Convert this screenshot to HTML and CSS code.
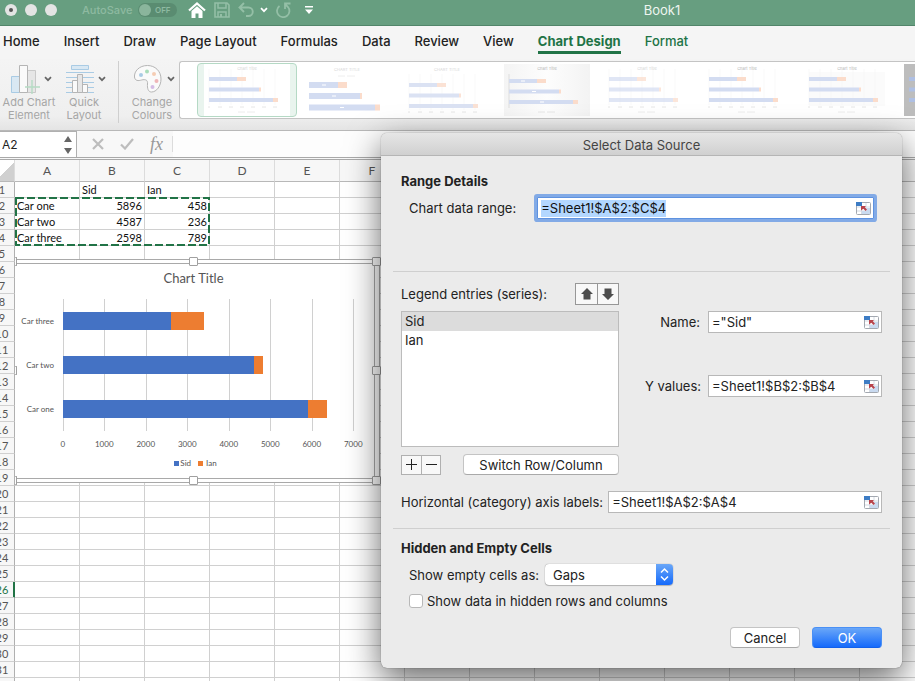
FILE: index.html
```
<!DOCTYPE html>
<html lang="en">
<head>
  <meta charset="UTF-8">
  <title>Book1</title>
  <link rel="stylesheet" href="styles.css">
</head>
<body>
  <svg class="defs" aria-hidden="true">
    <symbol id="picker" viewBox="0 0 15 13">
      <rect x=".5" y=".5" width="14" height="12" rx="1" fill="#fff" stroke="#a3a8b0"/>
      <path d="M1 5h13M1 9h13M5.500 1v11M10 1v11" stroke="#d5dbe4" fill="none"/>
      <path d="M6 9h8v3H6zM10.500 6H14v3h-3.500z" fill="#c9daf0"/>
      <path d="M0 0h6v4H0z" fill="#3d7cc4"/>
      <path d="M5 4h5L8.800 5.300 11 7.600 9.600 9 7.300 6.700 5 8.500z" fill="#b8434b"/>
    </symbol>
    <symbol id="chevron" viewBox="0 0 8 6">
      <path d="M1 1.200l3 3 3-3" fill="none" stroke="currentColor" stroke-width="1.700"/>
    </symbol>
    <symbol id="ticks" viewBox="0 0 80 46">
      <path d="M5 0v36M16 0v36M27 0v36M38 0v36M49 0v36M60 0v36M71 0v36M82 0v36" stroke="#f5f5f5" stroke-width=".6"/>
      <path d="M4 38h2M14 38h4M25 38h4M36 38h4M47 38h4M58 38h4M69 38h4" stroke="#e6e6e6"/>
      <path d="M34 43h7M43 43h8" stroke="#ececec"/>
    </symbol>
    <symbol id="bars" viewBox="0 0 86 52">
      <path d="M5 13h28v4H5zM5 23.500h50v4H5zM5 34h64v4H5z" fill="#d3dcf1"/>
      <path d="M33 13h9v4h-9zM55 23.500h2v4h-2zM69 34h5v4h-5z" fill="#fbdccb"/>
    </symbol>
    <symbol id="bars-thick" viewBox="0 0 86 52">
      <path d="M5 18h29v6H5zM5 29h51v6H5zM5 40.500h66v6H5z" fill="#d3dcf1"/>
      <path d="M34 18h9v6h-9zM56 29h2v6h-2zM71 40.500h5v6h-5z" fill="#fbdccb"/>
      <path d="M18 21h4M28 32h4M36 43.500h4" stroke="#fff"/>
    </symbol>
  </svg>

  <header class="titlebar">
    <span class="light light-dot"></span>
    <span class="light"></span>
    <span class="light"></span>
    <span class="autosave">AutoSave</span>
    <button class="toggle" aria-label="AutoSave off"><span class="knob"></span>OFF</button>
    <div class="quick">
      <button aria-label="Home"><svg width="18" height="16" viewBox="0 0 18 16"><path d="M1 8.500L9 1.500l8 7" fill="none" stroke="#fff" stroke-width="2.200"/><path d="M3.500 9L9 4.300 14.500 9v7h-4v-4.500h-3V16h-4z" fill="#fff"/></svg></button>
      <button class="faded" aria-label="Save"><svg width="16" height="16" viewBox="0 0 16 16"><path d="M1 1h12l2 2v12H1z" fill="none" stroke="currentColor" stroke-width="1.600"/><path d="M4 1v5h8V1M4 15v-5h8v5" fill="none" stroke="currentColor" stroke-width="1.500"/><path d="M6 12h2v3H6z" fill="currentColor"/></svg></button>
      <button class="faded" aria-label="Undo"><svg width="17" height="16" viewBox="0 0 17 16"><path d="M6 1L1.500 5.500 6 10M2 5.500h8.500a4 4 0 0 1 0 8.500H8" fill="none" stroke="currentColor" stroke-width="1.900"/></svg></button>
      <button class="more" aria-label="Undo list"><svg width="8" height="6"><use href="#chevron"/></svg></button>
      <button class="faded" aria-label="Redo"><svg width="16" height="16" viewBox="0 0 16 16"><path d="M3.500 4A6.200 6.200 0 1 0 12 5L9.500 2.500M9 7V1.500h5.500" fill="none" stroke="currentColor" stroke-width="1.800"/></svg></button>
      <button class="customise" aria-label="Customise toolbar"><svg width="8" height="8" viewBox="0 0 8 8"><path d="M0 0h8v1.500H0zM0 3.500h8L4 8z" fill="#fff"/></svg></button>
    </div>
    <span class="doc-name">Book1</span>
  </header>

  <nav class="tabs">
    <a href="#">Home</a>
    <a href="#">Insert</a>
    <a href="#">Draw</a>
    <a href="#">Page Layout</a>
    <a href="#">Formulas</a>
    <a href="#">Data</a>
    <a href="#">Review</a>
    <a href="#">View</a>
    <a href="#" class="active">Chart Design</a>
    <a href="#" class="context">Format</a>
  </nav>

  <section class="ribbon">
    <button class="tool">
      <span class="tool-icon">
        <svg width="30" height="30" viewBox="0 0 30 30"><path d="M1.500 12.500h8v16h-8z" fill="#d9e8f3" stroke="#a9cbe4"/><path d="M17.500 6.500h8v22h-8z" fill="#e6e6e6" stroke="#c9c9c9"/><path d="M9.500 1.500h8v27h-8z" fill="#fafafa" stroke="#b5b5b5"/><path d="M22 16v14M15 23h15" stroke="#b5dcc4" stroke-width="1.400"/></svg>
        <svg class="drop" width="8" height="6"><use href="#chevron"/></svg>
      </span>
      Add Chart<br>Element
    </button>
    <button class="tool">
      <span class="tool-icon">
        <svg width="28" height="30" viewBox="0 0 28 30"><path d="M0 8.500h28M0 13.500h28M0 18.500h28M0 23.500h28M0 28.500h28" stroke="#a9cbe4"/><path d="M5.500 1.500h17v4h-17z" fill="#d9e8f3" stroke="#a9cbe4"/><path d="M6.500 16.500h5v12h-5zM16.500 20.500h5v8h-5z" fill="#fafafa" stroke="#b5b5b5"/><path d="M11.500 10.500h5v18h-5z" fill="#e6e6e6" stroke="#b5b5b5"/></svg>
        <svg class="drop" width="8" height="6"><use href="#chevron"/></svg>
      </span>
      Quick<br>Layout
    </button>
    <button class="tool tool-colours">
      <span class="tool-icon">
        <svg width="30" height="30" viewBox="0 0 30 30"><path d="M14.500 1.500C6 1.500 1 7.500 1.500 13c.4 4 4 4 7 3 4-1 6.500 0 6 4-.3 4 .5 8 4 8 5 0 9.500-6 9.500-13 0-8-6-13.500-13.500-13.500z" fill="#fafafa" stroke="#b5b5b5"/><circle cx="8" cy="11" r="2" fill="#a9cbe4"/><circle cx="14" cy="7.500" r="2" fill="#a9dcb9"/><circle cx="21" cy="10" r="2" fill="#f5cdb4"/><circle cx="23.500" cy="17" r="2" fill="#efb5b8"/><circle cx="19.500" cy="23" r="2" fill="#d5bce6"/></svg>
        <svg class="drop" width="8" height="6"><use href="#chevron"/></svg>
      </span>
      Change<br>Colours
    </button>
    <div class="gallery">
      <button class="thumb selected" aria-label="Style 1"><svg viewBox="0 0 86 52"><rect width="86" height="52" fill="#fff"/><use href="#ticks" y="5" width="80" height="46"/><use href="#bars"/><text x="43" y="6" class="tiny">Chart Title</text></svg></button>
      <button class="thumb" aria-label="Style 2"><svg viewBox="0 0 86 52"><use href="#bars-thick"/><text x="43" y="7" class="tiny">CHART TITLE</text><path d="M34 12h7M43 12h8" stroke="#eee"/></svg></button>
      <button class="thumb" aria-label="Style 3"><svg viewBox="0 0 86 52"><use href="#ticks" y="10" width="80" height="46"/><g opacity=".8"><use href="#bars" y="6"/></g><text x="43" y="7" class="tiny">CHART TITLE</text></svg></button>
      <button class="thumb" aria-label="Style 4"><svg viewBox="0 0 86 52"><defs><linearGradient id="grey"><stop stop-color="#f4f4f4"/><stop offset=".5" stop-color="#fdfdfd"/><stop offset="1" stop-color="#f3f3f3"/></linearGradient></defs><rect width="86" height="52" fill="url(#grey)"/><path d="M5 10v34" stroke="#ddd"/><use href="#bars" y="2"/><path d="M17 17h4M28 27.500h4M36 38h4" stroke="#fff"/><text x="43" y="6" class="tiny dark">Chart Title</text><path d="M34 48h7M43 48h8" stroke="#e6e6e6"/></svg></button>
      <button class="thumb" aria-label="Style 5"><svg viewBox="0 0 86 52"><use href="#ticks" y="5" width="80" height="46"/><g opacity=".7"><use href="#bars"/></g><text x="43" y="6" class="tiny">Chart Title</text></svg></button>
      <button class="thumb" aria-label="Style 6"><svg viewBox="0 0 86 52"><use href="#ticks" y="5" width="80" height="46"/><use href="#bars"/><text x="43" y="6" class="tiny dark">Chart Title</text></svg></button>
      <button class="thumb" aria-label="Style 7"><svg viewBox="0 0 86 52"><rect x="5" y="8" width="76" height="34" fill="#fbfbfb"/><use href="#ticks" y="5" width="80" height="46"/><use href="#bars"/><text x="43" y="6" class="tiny dark">Chart Title</text></svg></button>
      <button class="thumb" aria-label="Style 8"><svg viewBox="0 0 86 52"><rect width="86" height="52" fill="#bdbdbd"/><path d="M5 13h28v4H5zM5 23.500h50v4H5zM5 34h64v4H5z" fill="#aebfe3"/></svg></button>
    </div>
  </section>

  <section class="formula-bar">
    <div class="name-box">
      <input type="text" value="A2" aria-label="Name box">
      <svg width="8" height="18" viewBox="0 0 8 18"><path d="M4 0l4 6H0zM4 18l4-6H0z" fill="#666"/></svg>
    </div>
    <div class="formula-tools">
      <button aria-label="Cancel entry"><svg width="12" height="12" viewBox="0 0 12 12"><path d="M1 1l10 10M11 1L1 11" stroke="#bdbdbd" stroke-width="2.200"/></svg></button>
      <button aria-label="Confirm entry"><svg width="14" height="12" viewBox="0 0 14 12"><path d="M1 6.500l4 4L13 1" fill="none" stroke="#bdbdbd" stroke-width="2.200"/></svg></button>
      <button class="fx" aria-label="Insert function">fx</button>
    </div>
    <input type="text" class="formula-input" aria-label="Formula">
  </section>

  <main class="sheet">
    <table class="grid">
      <colgroup id="cols"><col class="col-num"></colgroup>
      <thead><tr id="letters"><th class="corner"></th></tr></thead>
      <tbody id="rows"></tbody>
    </table>

    <svg class="ants" aria-hidden="true"><rect x="1" y="1" width="193" height="47" fill="none" stroke="#217346" stroke-width="2" stroke-dasharray="8 3"/></svg>

    <div class="chart-frame">
      <div class="chart">
        <h2>Chart Title</h2>
        <div class="plot">
          <div class="cats"><span>Car three</span><span>Car two</span><span>Car one</span></div>
          <div class="bars">
            <div class="lines"><i></i><i></i><i></i><i></i><i></i><i></i><i></i></div>
            <div class="bar"><span class="sid" style="width:37.110%"></span><span class="ian" style="width:11.270%"></span></div>
            <div class="bar"><span class="sid" style="width:65.530%"></span><span class="ian" style="width:3.370%"></span></div>
            <div class="bar"><span class="sid" style="width:84.230%"></span><span class="ian" style="width:6.540%"></span></div>
          </div>
        </div>
        <div class="axis"><span>0</span><span>1000</span><span>2000</span><span>3000</span><span>4000</span><span>5000</span><span>6000</span><span>7000</span></div>
        <div class="legend"><span class="key sid"></span>Sid<span class="key ian"></span>Ian</div>
      </div>
      <span class="handle n"></span><span class="handle ne"></span><span class="handle e"></span>
      <span class="handle se"></span><span class="handle s"></span>
      <span class="handle half nw"></span><span class="handle half w"></span><span class="handle half sw"></span>
    </div>
  </main>

  <form class="dialog" role="dialog" aria-labelledby="dialogTitle">
    <div class="dialog-title" id="dialogTitle">Select Data Source</div>
    <div class="dialog-body">
      <h3>Range Details</h3>
      <div class="row range-row">
        <label for="range">Chart data range:</label>
        <div class="field focused">
          <input type="text" id="range" value="=Sheet1!$A$2:$C$4">
          <button type="button" aria-label="Pick range"><svg width="15" height="13"><use href="#picker"/></svg></button>
        </div>
      </div>
      <hr>
      <div class="series">
        <div class="series-list">
          <div class="row series-head">
            <label for="series">Legend entries (series):</label>
            <div class="pair">
              <button type="button" aria-label="Move up"><svg width="12" height="12" viewBox="0 0 12 12"><path d="M6 0l6 6H9.500v5.500h-7V6H0z" fill="#4d4d4d"/></svg></button>
              <button type="button" aria-label="Move down"><svg width="12" height="12" viewBox="0 0 12 12"><path d="M6 12L0 6h2.500V.5h7V6H12z" fill="#4d4d4d"/></svg></button>
            </div>
          </div>
          <select id="series" class="listbox" size="6">
            <option selected>Sid</option>
            <option>Ian</option>
          </select>
          <div class="row series-foot">
            <div class="pair small">
              <button type="button" aria-label="Add series"><svg width="11" height="11" viewBox="0 0 11 11"><path d="M5.500 0v11M0 5.500h11" stroke="#222"/></svg></button>
              <button type="button" aria-label="Remove series"><svg width="11" height="11" viewBox="0 0 11 11"><path d="M0 5.500h11" stroke="#222"/></svg></button>
            </div>
            <button type="button" class="btn switch">Switch Row/Column</button>
          </div>
        </div>
        <div class="series-values">
          <label for="name">Name:</label>
          <div class="field">
            <input type="text" id="name" value='="Sid"'>
            <button type="button" aria-label="Pick name"><svg width="15" height="13"><use href="#picker"/></svg></button>
          </div>
          <label for="yvalues">Y values:</label>
          <div class="field">
            <input type="text" id="yvalues" value="=Sheet1!$B$2:$B$4">
            <button type="button" aria-label="Pick values"><svg width="15" height="13"><use href="#picker"/></svg></button>
          </div>
        </div>
      </div>
      <div class="row axis-row">
        <label for="axis">Horizontal (category) axis labels:</label>
        <div class="field">
          <input type="text" id="axis" value="=Sheet1!$A$2:$A$4">
          <button type="button" aria-label="Pick labels"><svg width="15" height="13"><use href="#picker"/></svg></button>
        </div>
      </div>
      <hr>
      <h3>Hidden and Empty Cells</h3>
      <div class="row empty-row">
        <label for="empty">Show empty cells as:</label>
        <div class="popup">
          <select id="empty"><option>Gaps</option><option>Zero</option></select>
          <svg width="17" height="21" viewBox="0 0 17 21"><path d="M5 8.500l3.500-3.500L12 8.500M5 12.500l3.500 3.500 3.500-3.500" fill="none" stroke="#fff" stroke-width="1.500"/></svg>
        </div>
      </div>
      <div class="row check-row">
        <input type="checkbox" id="hidden">
        <label for="hidden">Show data in hidden rows and columns</label>
      </div>
      <div class="actions">
        <button type="button" class="btn">Cancel</button>
        <button type="button" class="btn primary">OK</button>
      </div>
    </div>
  </form>

  <script src="script.js"></script>
</body>
</html>
```
FILE: styles.css
```
* {
  box-sizing: border-box;
}
body {
  margin: 0;
  height: 100vh;
  overflow: hidden;
  position: relative;
  display: flex;
  flex-direction: column;
  background: #fff;
  color: #222;
  font-family: Inter, "Liberation Sans", sans-serif;
  font-size: 13px;
}
button, input, select {
  font: inherit;
  color: inherit;
  margin: 0;
}
button {
  padding: 0;
  border: 0;
  background: none;
}
svg {
  display: block;
  flex: none;
}
.defs {
  position: absolute;
  width: 0;
  height: 0;
}

/* title bar */
.titlebar {
  flex: none;
  display: flex;
  align-items: center;
  height: 26px;
  padding: 0 0 5px 5px;
  background: #679e80;
  border-bottom: 1px solid #52856a;
}
.light {
  display: flex;
  width: 12px;
  height: 12px;
  margin-right: 8px;
  border-radius: 50%;
  background: #e4e4e4;
}
.light-dot::after {
  content: "";
  width: 4px;
  height: 4px;
  margin: auto;
  border-radius: 50%;
  background: #555;
}
.autosave {
  width: 56px;
  margin-left: 17px;
  color: #8ebaa1;
  font-size: 11px;
  font-weight: 500;
}
.toggle {
  display: flex;
  align-items: center;
  gap: 4px;
  width: 39px;
  height: 14px;
  border-radius: 7px;
  background: #5a8c71;
  color: #8ebaa1;
  font-size: 8px;
  font-weight: 600;
}
.knob {
  width: 12px;
  height: 12px;
  margin-left: 1px;
  border-radius: 50%;
  background: #8ab59c;
}
.quick {
  display: flex;
  align-items: center;
  margin-left: 11px;
  gap: 8px;
  color: #fff;
}
.quick .faded {
  color: #94bfa6;
}
.quick .more {
  margin-left: -3px;
}
.customise {
  margin-left: 5px;
}
.doc-name {
  flex: 1;
  padding: 0 50px 0 146px;
  text-align: center;
  color: #eef5f0;
}

/* ribbon */
.tabs {
  flex: none;
  display: flex;
  gap: 24px;
  height: 33px;
  padding: 7px 3px 0;
  background: #f5f5f5;
  font-weight: 500;
}
.tabs a {
  height: 21px;
  line-height: 17px;
  color: #222;
  text-decoration: none;
  white-space: nowrap;
}
.tabs .active, .tabs .context {
  color: #217346;
}
.tabs .active {
  border-bottom: 3px solid #217346;
  font-weight: 700;
}
.ribbon {
  flex: none;
  display: flex;
  height: 72px;
  padding: 2px 0 12px;
  background: linear-gradient(#f4f4f4, #efefef 80%, #e4e4e4);
  border-bottom: 1px solid #b8b8b8;
}
.tool {
  flex: none;
  display: flex;
  flex-direction: column;
  align-items: center;
  width: 58px;
  height: 62px;
  color: #a6a6a6;
  font-size: 11px;
  line-height: 13px;
}
.tool + .tool {
  width: 52px;
}
.tool-icon {
  display: flex;
  align-items: center;
  gap: 4px;
  padding-left: 4px;
  margin: 3px 0 2px;
}
.tool .drop {
  color: #666;
}
.ribbon .tool-colours {
  width: 60px;
  margin-left: 8px;
  border-left: 1px solid #cfcfcf;
  padding-left: 7px;
}
.gallery {
  flex: 1;
  display: flex;
  overflow: hidden;
  height: 58px;
  margin-left: 1px;
  padding: 1px 0 0 17px;
  background: #fff;
  border: 1px solid #c4c4c4;
  border-right: 0;
  border-radius: 3px 0 0 3px;
}
.thumb {
  flex: none;
  width: 100px;
  height: 54px;
  padding: 0 7px;
  border: 1px solid transparent;
  border-radius: 4px;
}
.thumb svg {
  width: 86px;
  height: 52px;
  margin-left: -1px;
}
.thumb.selected {
  background: #e9f4ee;
  border-color: #b5d9c5;
}
.tiny {
  font-size: 4px;
  text-anchor: middle;
  fill: #d6d6d6;
}
.tiny.dark {
  fill: #b5b5b5;
}

/* formula bar */
.formula-bar {
  flex: none;
  display: flex;
  height: 29px;
  background: #f8f8f8;
  border-bottom: 3px double #a9a9a9;
}
.name-box {
  display: flex;
  align-items: center;
  width: 77px;
  padding: 0 4px 0 2px;
  background: #fff;
  border: 1px solid #b0b0b0;
  border-left: 0;
  border-bottom: 0;
}
.name-box input {
  flex: 1;
  min-width: 0;
  padding: 0;
  border: 0;
  font-size: 12px;
}
.formula-tools {
  display: flex;
  align-items: center;
  gap: 16px;
  width: 96px;
  margin: 5px 0;
  padding-left: 15px;
  border-right: 1px solid #dcdcdc;
}
.fx {
  color: #999;
  font: italic 18px "Liberation Serif", serif;
}
.formula-input {
  flex: 1;
  border: 0;
  background: #fdfdfd;
}

/* sheet */
.sheet {
  flex: 1;
  min-height: 0;
  position: relative;
  overflow: hidden;
  font-family: Lato, "Liberation Sans", sans-serif;
  font-size: 11px;
  color: #111;
}
.grid {
  width: max-content;
  margin-left: -10px;
  table-layout: fixed;
  border-collapse: separate;
  border-spacing: 0;
}
.grid col {
  width: 65px;
}
.grid .col-num {
  width: 25px;
}
.grid th, .grid td {
  height: 16px;
  padding: 0 2px;
  border-right: 1px solid #d0d0d0;
  border-bottom: 1px solid #d0d0d0;
  line-height: 15px;
  white-space: nowrap;
}
.grid th {
  background: #f7f7f7;
  color: #555;
  font-weight: 400;
  text-align: center;
}
.grid tbody th {
  padding: 0;
  border-right-color: #b0b0b0;
}
.grid thead th {
  height: 22px;
  border-right-color: #dcdcdc;
  border-bottom-color: #b8b8b8;
  font-size: 12px;
}
.grid thead .corner {
  background: linear-gradient(135deg, transparent 60%, #d0d0d0 60%);
}
.grid tbody .current {
  color: #217346;
  box-shadow: inset -1px 0 #217346;
  border-right-color: #217346;
}
.grid .num {
  text-align: right;
}
.ants {
  position: absolute;
  left: 15px;
  top: 37px;
  width: 195px;
  height: 49px;
}

/* chart */
.chart-frame {
  position: absolute;
  left: 15px;
  top: 99px;
  width: 365px;
  height: 224px;
  padding: 3px 4px 3px 0;
  background: #fff;
  border: 1px solid #a9a9a9;
  border-left: 0;
  color: #555;
}
.chart {
  height: 100%;
  padding: 0 20px 0 2px;
  border: 1px solid #a9a9a9;
  border-left: 0;
}
.chart h2 {
  margin: 0 0 12px 16px;
  padding-top: 6px;
  font-size: 13px;
  line-height: 17px;
  font-weight: 400;
  text-align: center;
}
.plot {
  display: flex;
  height: 132px;
}
.cats {
  display: flex;
  flex-direction: column;
  width: 46px;
  padding-right: 9px;
  text-align: right;
  font-size: 8px;
}
.cats span {
  flex: 1;
  display: flex;
  align-items: center;
  justify-content: flex-end;
  white-space: nowrap;
}
.bars {
  flex: 1;
  position: relative;
  display: flex;
  flex-direction: column;
  justify-content: space-around;
}
.lines {
  position: absolute;
  inset: 0;
  display: flex;
  border-left: 1px solid #d0d0d0;
}
.lines i {
  flex: 1;
  border-right: 1px solid #d0d0d0;
}
.bar {
  position: relative;
  display: flex;
  height: 18px;
}
.sid {
  background: #4472c4;
}
.ian {
  background: #ed7d31;
}
.axis {
  display: flex;
  justify-content: space-between;
  margin: 7px -20px 0 25px;
  font-size: 8px;
  line-height: 12px;
}
.axis span {
  width: 42px;
  text-align: center;
}
.legend {
  display: flex;
  align-items: center;
  justify-content: center;
  margin: 7px 0 0 20px;
  font-size: 8px;
  line-height: 12px;
}
.key {
  width: 5px;
  height: 5px;
}
.key.sid {
  margin-right: 1px;
}
.key.ian {
  margin: 0 3px 0 7px;
}
.handle {
  position: absolute;
  width: 9px;
  height: 9px;
  background: #fff;
  border: 1px solid #a0a0a0;
  border-radius: 1px;
}
.handle.n, .handle.s {
  left: 174px;
}
.handle.n, .handle.ne, .handle.nw {
  top: -3px;
}
.handle.s, .handle.se, .handle.sw {
  bottom: -3px;
}
.handle.ne, .handle.e, .handle.se {
  right: -2px;
}
.handle.e, .handle.w {
  top: 106px;
}
.handle.half {
  left: 0;
  width: 2px;
  border-left: 0;
}

/* dialog */
.dialog {
  position: absolute;
  top: 133px;
  left: 381px;
  right: 13px;
  background: #ebebeb;
  border-radius: 6px;
  box-shadow: 0 0 1px rgba(0, 0, 0, .6), 0 12px 34px rgba(0, 0, 0, .6);
}
.dialog-title {
  height: 23px;
  line-height: 24px;
  text-align: center;
  color: #444;
  background: linear-gradient(#e6e6e6, #d0d0d0);
  border-bottom: 1px solid #b5b5b5;
  border-radius: 6px 6px 0 0;
}
.dialog-body {
  padding: 16px 20px 20px;
}
.dialog h3 {
  margin: 0;
  font-size: 13px;
  line-height: 18px;
  font-weight: 700;
}
.dialog hr {
  margin: 0 -8px;
  border: 0;
  border-top: 1px solid #cfcfcf;
}
.dialog label {
  white-space: nowrap;
}
.row {
  display: flex;
  align-items: center;
}
.field {
  flex: 1;
  display: flex;
  align-items: center;
  min-width: 0;
  height: 22px;
  padding: 0 2px 0 3px;
  background: #fff;
  border: 1px solid #b8b8b8;
}
.field input {
  flex: 1;
  min-width: 0;
  padding: 0;
  border: 0;
  background: none;
  outline: 0;
  line-height: 17px;
}
.field.focused {
  border-color: #5e92e0;
  box-shadow: 0 0 0 3px #82aae6;
  border-radius: 1px;
}
.field input::selection {
  background: #b3d7ff;
  color: #111;
}
.range-row {
  gap: 21px;
  margin: 7px 8px 52px 8px;
}
.series {
  display: flex;
  gap: 26px;
  margin: 11px 0 16px;
}
.series-list {
  width: 218px;
}
.series-head, .series-foot {
  justify-content: space-between;
}
.pair {
  display: flex;
  height: 22px;
  border: 1px solid #979797;
  background: #f8f8f8;
}
.pair button {
  display: flex;
  align-items: center;
  justify-content: center;
  width: 21px;
}
.pair button + button {
  border-left: 1px solid #979797;
}
.pair.small {
  height: 20px;
  border-color: #b0b0b0;
}
.pair.small button {
  width: 19px;
  border-color: #b0b0b0;
}
.listbox {
  display: block;
  width: 100%;
  height: 136px;
  margin: 6px 0 7px;
  padding: 0;
  background: #fff;
  border: 1px solid #bcbcbc;
  border-radius: 0;
  outline: 0;
  overflow: hidden;
}
.listbox option {
  min-height: 19px;
  padding: 1px 3px 0;
  line-height: 18px;
}
.listbox option:checked {
  background: #dcdcdc linear-gradient(#dcdcdc, #dcdcdc);
  color: #222;
}
.btn {
  width: 70px;
  height: 21px;
  background: #fff;
  border: 1px solid #c4c4c4;
  border-bottom-color: #a9a9a9;
  border-radius: 4px;
}
.btn.switch {
  width: 156px;
}
.btn.primary {
  color: #fff;
  background: linear-gradient(#6aa7f8, #156afb);
  border-color: #4a90f5;
  border-bottom-color: #1260ea;
}
.series-values {
  flex: 1;
  display: grid;
  grid-template-columns: 55px 1fr;
  column-gap: 8px;
  row-gap: 42px;
  align-content: start;
  align-items: center;
  padding-top: 28px;
}
.series-values label {
  text-align: right;
}
.axis-row {
  gap: 5px;
  margin-bottom: 15px;
}
.dialog hr + h3 {
  margin-top: 10px;
}
.empty-row {
  gap: 6px;
  margin: 7px 0 0 8px;
}
.popup {
  display: flex;
  width: 128px;
  height: 21px;
  background: #fff;
  border-radius: 4px;
  box-shadow: 0 0 1px rgba(0, 0, 0, .5), 0 1px 1px rgba(0, 0, 0, .2);
  overflow: hidden;
}
.popup select {
  flex: 1;
  appearance: none;
  padding: 0 8px;
  border: 0;
  background: none;
}
.popup svg {
  background: linear-gradient(#6aa7f8, #156afb);
}
.check-row {
  gap: 4px;
  margin: 7px 0 0 8px;
  height: 17px;
}
.check-row input {
  appearance: none;
  width: 14px;
  height: 14px;
  background: #fff;
  border: 1px solid #b8b8b8;
  border-radius: 3px;
}
.actions {
  display: flex;
  justify-content: flex-end;
  gap: 12px;
  margin-top: 18px;
}
```
FILE: script.js
```
const data = [
  ['', 'Sid', 'Ian'],
  ['Car one', 5896, 458],
  ['Car two', 4587, 236],
  ['Car three', 2598, 789]
];
const colCount = 14;
const cols = document.getElementById('cols');
const letters = document.getElementById('letters');
const rows = document.getElementById('rows');

for (let c = 0; c < colCount; c++) {
  cols.appendChild(document.createElement('col'));
  const th = document.createElement('th');
  th.textContent = String.fromCharCode(65 + c);
  letters.appendChild(th);
}

for (let r = 1; r <= 32; r++) {
  const tr = document.createElement('tr');
  const th = document.createElement('th');
  th.textContent = r;
  if (r === 26) th.className = 'current';
  tr.appendChild(th);
  for (let c = 0; c < colCount; c++) {
    const td = document.createElement('td');
    const value = data[r - 1] ? data[r - 1][c] : undefined;
    if (value !== undefined) td.textContent = value;
    if (typeof value === 'number') td.className = 'num';
    tr.appendChild(td);
  }
  rows.appendChild(tr);
}

// the range field opens focused with its text selected
document.getElementById('range').select();
```
